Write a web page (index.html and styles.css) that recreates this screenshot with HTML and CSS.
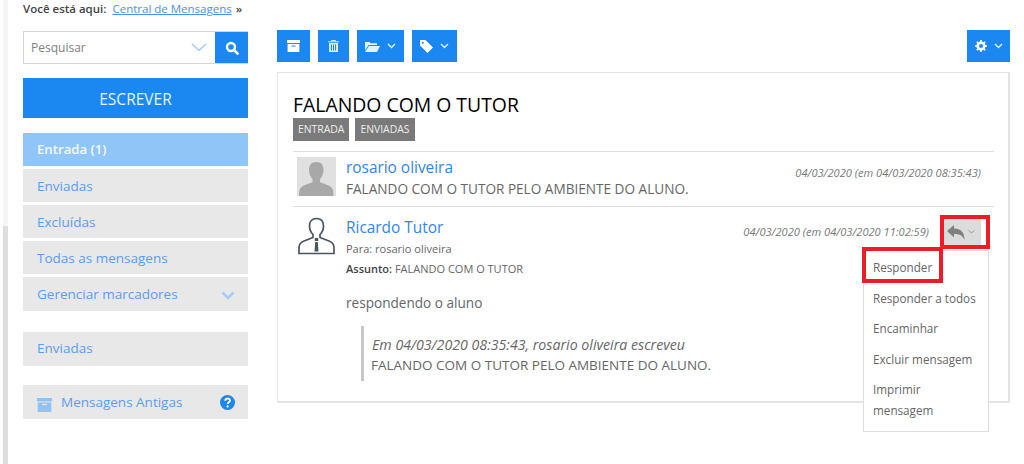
FILE: index.html
```html
<!DOCTYPE html>
<html lang="pt-BR">
<head>
    <meta charset="UTF-8">
    <title>Central de Mensagens</title>
    <link rel="stylesheet" href="styles.css">
</head>
<body>
    <div class="scroll-track"><div class="scroll-thumb"></div></div>
    <div class="page">
        <div class="breadcrumb">
            <strong>Você está aqui:</strong>
            <a href="#">Central de Mensagens</a>
            <strong>»</strong>
        </div>
        <div class="layout">
            <div class="sidebar">
                <div class="search">
                    <span class="search-label">Pesquisar</span>
                    <svg class="search-caret" width="16" height="9" viewBox="0 0 16 9"><path d="M1 1l7 6.5L15 1" fill="none" stroke="#a6cdf5" stroke-width="1.6"/></svg>
                    <span class="search-btn">
                        <svg width="14" height="14" viewBox="0 0 14 14"><circle cx="6" cy="6" r="4" fill="none" stroke="#fff" stroke-width="2.4"/><path d="M9 9l3.6 3.6" stroke="#fff" stroke-width="2.6" stroke-linecap="round"/></svg>
                    </span>
                </div>
                <a class="compose" href="#">ESCREVER</a>
                <ul class="side-menu">
                    <li class="active">Entrada (1)</li>
                    <li>Enviadas</li>
                    <li>Excluídas</li>
                    <li>Todas as mensagens</li>
                    <li class="with-icon tall">
                        Gerenciar marcadores
                        <svg class="menu-caret" width="14" height="9" viewBox="0 0 14 9"><path d="M1.5 1.5L7 7l5.5-5.5" fill="none" stroke="#a6cdf5" stroke-width="2.6"/></svg>
                    </li>
                </ul>
                <ul class="side-menu">
                    <li class="tall">Enviadas</li>
                </ul>
                <ul class="side-menu side-menu-old">
                    <li class="with-icon tall old">
                        <svg width="15" height="14" viewBox="0 0 15 14"><path d="M0 0h15v3.5H0z" fill="#8fc3f7"/><path d="M.7 4.5h13.6V14H.7z" fill="#8fc3f7"/><path d="M5 6.5h5" stroke="#e8e8e8" stroke-width="1.2"/></svg>
                        <span class="old-label">Mensagens Antigas</span>
                        <svg class="help" width="15" height="15" viewBox="0 0 15 15"><circle cx="7.5" cy="7.5" r="7.5" fill="#1a88f0"/><path d="M5.2 5.8c0-3 4.8-3 4.8-.2 0 1.700-2.300 1.700-2.300 3.500" fill="none" stroke="#fff" stroke-width="1.800"/><circle cx="7.600" cy="11.400" r="1.100" fill="#fff"/></svg>
                    </li>
                </ul>
            </div>
            <div class="main">
                <div class="toolbar">
                    <a class="tool" href="#">
                        <svg width="13" height="12" viewBox="0 0 13 12"><path d="M0 0h13v3H0zM.6 4h11.800v8H.6z" fill="#fff"/><path d="M4.500 6h4" stroke="#1a88f0"/></svg>
                    </a>
                    <a class="tool tool-narrow" href="#">
                        <svg width="11" height="12" viewBox="0 0 11 12"><path d="M0 1.800h11M3.500 1.800V.5h4v1.300" fill="none" stroke="#d8ebfd" stroke-width="1"/><path d="M1 3h9v9H1z" fill="#d8ebfd"/><path d="M3.500 4.500v6M5.500 4.500v6M7.500 4.500v6" stroke="#1a88f0"/></svg>
                    </a>
                    <a class="tool tool-folder" href="#">
                        <svg width="15" height="11" viewBox="0 0 15 11"><path d="M0 1h4.500l1 1.300H12v1.700H3.500L0 9.500z" fill="#e4f1fe"/><path d="M3.900 5H15l-3 6H0z" fill="#e4f1fe"/></svg>
                        <svg class="caret" width="9" height="6" viewBox="0 0 9 6"><path d="M1 1l3.500 3.500L8 1" fill="none" stroke="#e4f1fe" stroke-width="1.400"/></svg>
                    </a>
                    <a class="tool tool-tag" href="#">
                        <svg width="13" height="13" viewBox="0 0 13 13"><path d="M0 0h5.500L13 7.500 7.500 13 0 5.500z" fill="#fff"/><circle cx="2.800" cy="2.800" r="1" fill="#1a88f0"/></svg>
                        <svg class="caret" width="9" height="6" viewBox="0 0 9 6"><path d="M1 1l3.500 3.500L8 1" fill="none" stroke="#e4f1fe" stroke-width="1.400"/></svg>
                    </a>
                    <a class="tool tool-gear" href="#">
                        <svg width="12" height="12" viewBox="0 0 12 12"><circle cx="6" cy="6" r="3.300" fill="none" stroke="#fff" stroke-width="2.600"/><path d="M6 0v12M0 6h12M1.800 1.800l8.400 8.400M10.200 1.800l-8.400 8.400" stroke="#fff" stroke-width="1.600" stroke-dasharray="2 8"/></svg>
                        <svg class="caret" width="9" height="6" viewBox="0 0 9 6"><path d="M1 1l3.500 3.500L8 1" fill="none" stroke="#e4f1fe" stroke-width="1.400"/></svg>
                    </a>
                </div>
                <div class="panel">
                    <h1>FALANDO COM O TUTOR</h1>
                    <div class="tags">
                        <span>ENTRADA</span>
                        <span>ENVIADAS</span>
                    </div>
                    <div class="message first">
                        <div class="avatar">
                            <svg width="39" height="39" viewBox="0 0 39 39"><path d="M0 0h39v39H0z" fill="#e0e0e0"/><path d="M19.500 5c5 0 7 3.500 7 8 0 4-1.500 7-3.500 9v3c3 2 12 3 13 8l.5 6H2l.5-6c1-5 10-6 13-8v-3c-2-2-3.500-5-3.500-9 0-4.500 2-8 7.500-8z" fill="#a8a8a8"/></svg>
                        </div>
                        <div class="message-body">
                            <a class="sender" href="#">rosario oliveira</a>
                            <p class="snippet">FALANDO COM O TUTOR PELO AMBIENTE DO ALUNO.</p>
                        </div>
                        <span class="date">04/03/2020 (em 04/03/2020 08:35:43)</span>
                    </div>
                    <div class="message second">
                        <div class="avatar">
                            <svg width="39" height="39" viewBox="0 0 39 39"><path d="M19.500 1.500c4.500 0 7 3 7 7.500 0 3.500-1.500 6.500-3.500 8.500v3l9 3.500c3 1.200 5 3.500 5 6.500v6H2v-6c0-3 2-5.300 5-6.500l9-3.500v-3c-2-2-3.500-5-3.500-8.500 0-4.500 2.500-7.500 7-7.500z" fill="none" stroke="#4a5560" stroke-width="1.700"/><path d="M17.800 21h3.400v3h-3.400zM18.200 25h2.600l.7 9.500h-4z" fill="#4a5560"/></svg>
                        </div>
                        <div class="message-body">
                            <a class="sender" href="#">Ricardo Tutor</a>
                            <p class="meta">Para: rosario oliveira</p>
                            <p class="meta"><strong>Assunto:</strong> FALANDO COM O TUTOR</p>
                            <p class="reply-text">respondendo o aluno</p>
                            <blockquote>
                                <em>Em 04/03/2020 08:35:43, rosario oliveira escreveu</em>
                                <span>FALANDO COM O TUTOR PELO AMBIENTE DO ALUNO.</span>
                            </blockquote>
                        </div>
                        <span class="date">04/03/2020 (em 04/03/2020 11:02:59)</span>
                        <a class="reply-btn" href="#">
                            <svg width="18" height="15" viewBox="0 0 18 15"><path d="M0 6L7 0v3.500C13.500 3.500 17.500 7 17.500 15 15.500 10.500 12.500 9 7 9v3.500z" fill="#808080"/></svg>
                            <svg width="7" height="4" viewBox="0 0 7 4"><path d="M.5.500l3 2.500 3-2.500" fill="none" stroke="#999"/></svg>
                        </a>
                    </div>
                </div>
                <ul class="dropdown">
                    <li>Responder</li>
                    <li>Responder a todos</li>
                    <li>Encaminhar</li>
                    <li>Excluir mensagem</li>
                    <li>Imprimir mensagem</li>
                </ul>
                <div class="mark mark-btn"></div>
                <div class="mark mark-item"></div>
            </div>
        </div>
    </div>
</body>
</html>
```

FILE: styles.css
```css
html, body {
    margin: 0;
    padding: 0;
    height: 464px;
    overflow: hidden;
}
body {
    font-family: "Open Sans", sans-serif;
    background-color: #fff;
    color: #666;
    font-size: 13px;
    position: relative;
}
a {
    text-decoration: none;
}
ul {
    list-style-type: none;
    margin: 0;
    padding: 0;
}
p {
    margin: 0;
}
.scroll-track {
    position: absolute;
    left: 3px;
    top: 0;
    width: 5px;
    height: 464px;
    background-color: #f6f6f6;
}
.scroll-thumb {
    margin-top: 226px;
    height: 238px;
    background-color: #dedede;
}
.page {
    padding-left: 23px;
    padding-right: 14px;
}
.breadcrumb {
    height: 30px;
    line-height: 18px;
    font-size: 11.5px;
    color: #444;
}
.breadcrumb strong {
    font-weight: 600;
}
.breadcrumb a {
    color: #4a90f0;
    text-decoration: underline;
    margin: 0 1px 0 3px;
}
.layout {
    display: flex;
    gap: 29px;
}
.sidebar {
    width: 225px;
    flex: none;
}
.search {
    display: flex;
    align-items: center;
    height: 33px;
    box-sizing: border-box;
    border: 1px solid #d5d5d5;
    border-width: 1px 0 1px 1px;
    margin-top: 1px;
}
.search-label {
    flex: 1;
    padding-left: 7px;
    font-size: 12px;
    color: #808080;
}
.search-caret {
    margin-right: 8px;
}
.search-btn {
    width: 33px;
    height: 31px;
    background-color: #1a88f0;
    display: flex;
    align-items: center;
    justify-content: center;
}
.compose {
    display: block;
    height: 40px;
    line-height: 42px;
    margin-top: 14px;
    background-color: #1a88f0;
    color: #e8f3fe;
    text-align: center;
    font-size: 15.5px;
}
.side-menu {
    margin-top: 15px;
}
.side-menu + .side-menu {
    margin-top: 21px;
}
.side-menu + .side-menu-old {
    margin-top: 19px;
}
.side-menu li {
    height: 33px;
    line-height: 35px;
    margin-bottom: 3px;
    padding-left: 14px;
    background-color: #e8e8e8;
    color: #5b9cf5;
    font-size: 13.5px;
}
.side-menu li.tall {
    height: 34px;
    line-height: 33px;
    margin-bottom: 0;
}
.side-menu li.active {
    background-color: #90c5f8;
    color: #f3f9ff;
    font-weight: 600;
    font-size: 13.2px;
    line-height: 33px;
}
.with-icon {
    display: flex;
    align-items: center;
    padding-right: 13px;
}
.menu-caret {
    margin-left: auto;
    margin-top: 3px;
}
.old-label {
    margin-left: 9px;
}
.help {
    margin-left: auto;
}
.old svg:first-child {
    margin-top: 5px;
}
.main {
    flex: 1;
    position: relative;
}
.toolbar {
    display: flex;
    gap: 8px;
    height: 32px;
    margin-bottom: 10px;
}
.tool {
    width: 33px;
    height: 32px;
    background-color: #1a88f0;
    display: flex;
    align-items: center;
    justify-content: center;
    gap: 7px;
}
.tool-narrow {
    width: 31px;
}
.tool-folder {
    width: 47px;
}
.tool-tag {
    width: 45px;
}
.tool-gear {
    width: 43px;
    margin-left: auto;
}
.panel {
    border: 1px solid #e4e4e4;
    border-width: 1px 2px 2px 1px;
    height: 331px;
    box-sizing: border-box;
    padding: 19px 14px 0 15px;
}
h1 {
    margin: 0;
    font-size: 19.4px;
    font-weight: 500;
    line-height: 26px;
    color: #000;
}
.tags {
    display: flex;
    gap: 6px;
    padding-bottom: 10px;
    border-bottom: 1px solid #ddd;
}
.tags span {
    height: 23px;
    line-height: 23px;
    padding: 0 5px;
    background-color: #7a7a7a;
    color: #eee;
    font-size: 10.4px;
}
.message {
    display: flex;
    padding-left: 4px;
    padding-right: 6px;
}
.message.first {
    height: 49px;
    padding-top: 5px;
    border-bottom: 1px solid #ddd;
}
.message.second {
    padding-top: 10px;
    position: relative;
}
.avatar {
    width: 39px;
    height: 39px;
    flex: none;
    margin-right: 10px;
}
.message-body {
    flex: 1;
}
.sender {
    display: block;
    font-size: 15.4px;
    line-height: 22px;
    color: #2f86ee;
    font-weight: 500;
}
.snippet {
    font-size: 13.6px;
    line-height: 20px;
}
.meta {
    font-size: 11px;
    line-height: 20px;
}
.meta strong {
    font-weight: 600;
    color: #444;
}
.reply-text {
    margin-top: 14px;
    font-size: 13.6px;
    line-height: 20px;
}
blockquote {
    margin: 13px 0 0 15px;
    padding: 9px 0 0 7px;
    border-left: 3px solid #c8c8c8;
    height: 55px;
    box-sizing: border-box;
    font-size: 13.5px;
    line-height: 20px;
}
blockquote em, blockquote span {
    display: block;
    white-space: nowrap;
}
blockquote em {
    font-size: 14.2px;
    margin-left: 1px;
}
.date {
    font-size: 11.1px;
    font-style: italic;
    color: #777;
    flex: none;
}
.first .date {
    margin-top: 8px;
    margin-right: 7px;
}
.second .date {
    margin-top: 7px;
    margin-right: 12px;
}
.reply-btn {
    width: 40px;
    height: 26px;
    flex: none;
    margin: 2px 7px 0 0;
    background-color: #dcdcdc;
    display: flex;
    align-items: center;
    justify-content: center;
    gap: 3px;
}
.dropdown {
    position: absolute;
    left: 586px;
    top: 220px;
    width: 126px;
    height: 182px;
    box-sizing: border-box;
    background-color: #fff;
    border: 1px solid #ddd;
    padding: 6px 9px 0;
    font-size: 11.7px;
    color: #666;
}
.dropdown li {
    line-height: 21px;
    margin-bottom: 9.5px;
}
.mark {
    position: absolute;
    border: 4px solid #ee1c25;
    box-sizing: border-box;
}
.mark-btn {
    left: 663px;
    top: 185px;
    width: 50px;
    height: 34px;
}
.mark-item {
    left: 585px;
    top: 217px;
    width: 81px;
    height: 36px;
}
```
